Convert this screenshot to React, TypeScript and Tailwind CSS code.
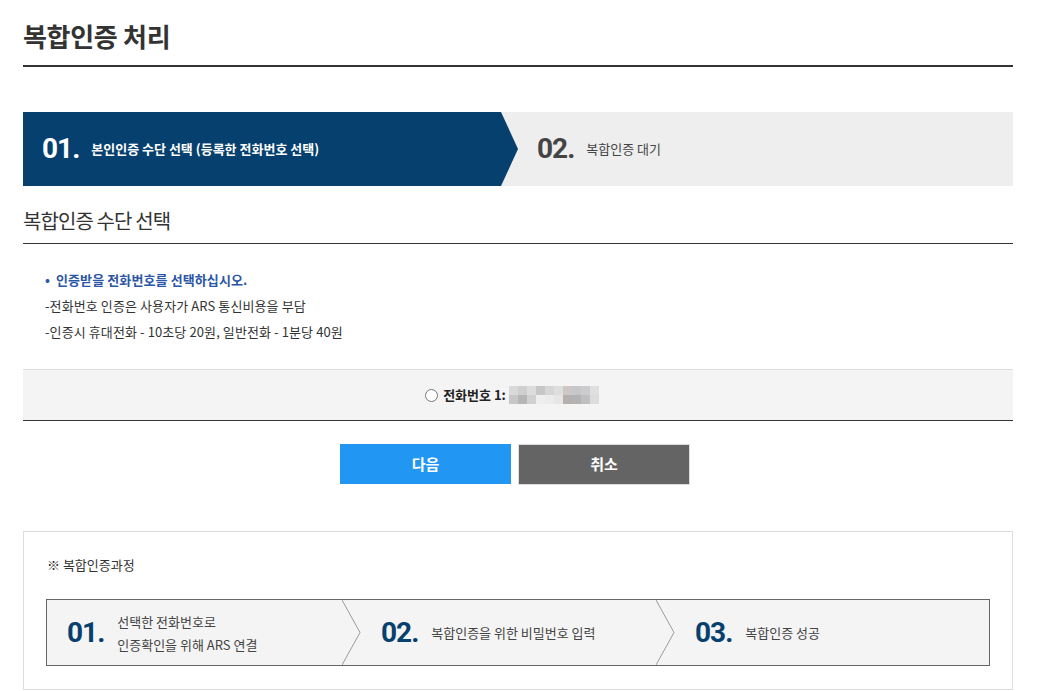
import React from "react";

const KR = "font-['Noto_Sans_CJK_KR','Noto_Sans',sans-serif]";
const NUM = "font-['Roboto','Liberation_Sans',sans-serif]";

function Chevron() {
  return (
    <svg className="absolute right-0 top-0 h-full w-[19px]" viewBox="0 0 19 66" preserveAspectRatio="none">
      <polyline points="0,0 18,33 0,66" fill="none" stroke="#9a9a9a" strokeWidth="1" />
    </svg>
  );
}

const pix = [
  ["#d9d9d9", "#cfcfcf", "#dcdcdc", "#c9c6c6", "#d6d6d6", "#dedede", "#cdc8c6", "#c6c7cb", "#cdcccc", "#dedfe1"],
  ["#c7c7c7", "#b6b6b6", "#d0d0d0", "#eeeeee", "#ececec", "#e8e6e5", "#b4b0ae", "#b3b3b6", "#c1bfbf", "#dcdcdc"],
];

export default function App() {
  return (
    <div className={`w-[1040px] min-h-[691px] bg-white ${KR} text-[#333]`}>
      <div className="ml-[23px] w-[990px]">
        {/* Title */}
        <div className="pt-[20px] pb-[13px] border-b-2 border-[#333]">
          <h1 className="text-[26px] leading-[32px] font-bold tracking-[-0.3px] text-[#333]">복합인증 처리</h1>
        </div>

        {/* Step bar */}
        <div className="mt-[45px] flex h-[74px] bg-[#eeeeee]">
          <div className="w-[495px] h-full bg-[#06406f] flex items-center pl-[19px] [clip-path:polygon(0_0,478px_0,100%_50%,478px_100%,0_100%)]">
            <span className={`${NUM} text-[28px] font-bold tracking-[-1px] text-white leading-none`}>01.</span>
            <span className="ml-[12px] text-[13px] font-bold text-white tracking-[0px]">본인인증 수단 선택 (등록한 전화번호 선택)</span>
          </div>
          <div className="flex items-center pl-[19px]">
            <span className={`${NUM} text-[28px] font-bold tracking-[-1px] text-[#444] leading-none`}>02.</span>
            <span className="ml-[12px] text-[13px] text-[#444] tracking-[0px]">복합인증 대기</span>
          </div>
        </div>

        {/* Section header */}
        <div className="pt-[20px] pb-[7px] border-b border-[#333]">
          <h2 className="text-[20px] leading-[30px] font-normal tracking-[-0.9px] text-[#333]">복합인증 수단 선택</h2>
        </div>

        {/* Notes */}
        <div className="pt-[23px] pl-[22px] text-[13px] leading-[26px] tracking-[0.1px]">
          <div className="flex items-center text-[#2b56a6] font-bold">
            <span className="w-[11px]">•</span>
            <span>인증받을 전화번호를 선택하십시오.</span>
          </div>
          <div className="text-[#333]">-전화번호 인증은 사용자가 ARS 통신비용을 부담</div>
          <div className="text-[#333]">-인증시 휴대전화 - 10초당 20원, 일반전화 - 1분당 40원</div>
        </div>

        {/* Phone select */}
        <div className="mt-[24px] h-[52px] bg-[#f4f4f4] border-t border-[#dddddd] border-b border-b-[#333] flex items-center justify-center pr-[12px]">
          <span className="w-[13px] h-[13px] rounded-full border border-[#767676] bg-white" />
          <span className="ml-[5px] text-[13px] font-bold text-[#222] tracking-[0px]">전화번호 1:</span>
          <span className="ml-[3px] flex flex-col">
            {pix.map((row, i) => (
              <span key={i} className="flex">
                {row.map((c, j) => (
                  <span key={j} className="w-[9px] h-[9px]" style={{ backgroundColor: c }} />
                ))}
              </span>
            ))}
          </span>
        </div>

        {/* Buttons */}
        <div className="mt-[23px] flex justify-center gap-[7px] pr-[6px]">
          <button className="w-[171px] h-[40px] bg-[#2196f3] text-white text-[15px] font-bold">다음</button>
          <button className="w-[172px] h-[41px] bg-[#646464] border border-[#dddddd] text-white text-[15px] font-bold">취소</button>
        </div>

        {/* Process box */}
        <div className="mt-[46px] border border-[#dddddd] px-[22px] pt-[23px] pb-[23px]">
          <div className="pl-[1px] text-[13px] leading-[20px] tracking-[0px] text-[#333]">※ 복합인증과정</div>
          <div className="mt-[24px] h-[67px] border border-[#666] bg-[#f4f4f4] flex">
            <div className="relative w-[314px] h-full flex items-center pl-[20px]">
              <span className={`${NUM} text-[28px] font-bold tracking-[-1px] text-[#06406f] leading-none`}>01.</span>
              <span className="ml-[13px] text-[13px] leading-[23px] text-[#444] tracking-[0px]">
                선택한 전화번호로
                <br />
                인증확인을 위해 ARS 연결
              </span>
              <Chevron />
            </div>
            <div className="relative w-[314px] h-full flex items-center pl-[20px]">
              <span className={`${NUM} text-[28px] font-bold tracking-[-1px] text-[#06406f] leading-none`}>02.</span>
              <span className="ml-[13px] text-[13px] text-[#444] tracking-[0px]">복합인증을 위한 비밀번호 입력</span>
              <Chevron />
            </div>
            <div className="relative flex-1 h-full flex items-center pl-[20px]">
              <span className={`${NUM} text-[28px] font-bold tracking-[-1px] text-[#06406f] leading-none`}>03.</span>
              <span className="ml-[13px] text-[13px] text-[#444] tracking-[0px]">복합인증 성공</span>
            </div>
          </div>
        </div>
      </div>
    </div>
  );
}
